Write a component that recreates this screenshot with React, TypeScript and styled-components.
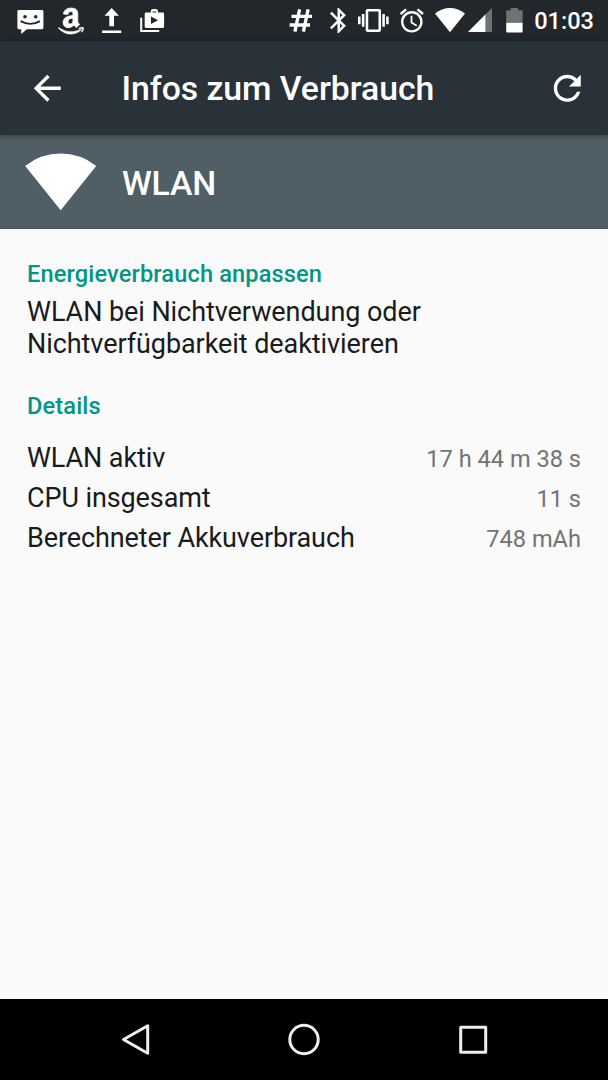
import React from "react";
import styled, { createGlobalStyle } from "styled-components";
import { FaAmazon } from "react-icons/fa";

const GlobalStyle = createGlobalStyle`
  * { box-sizing: border-box; }
  body { margin: 0; background: #fafafa; }
`;

const Screen = styled.div`
  width: 608px;
  height: 1080px;
  display: flex;
  flex-direction: column;
  overflow: hidden;
  background: #fafafa;
  font-family: Roboto, "Liberation Sans", sans-serif;
`;

const StatusBar = styled.div`
  flex: 0 0 41px;
  display: flex;
  justify-content: space-between;
  padding: 0 14px 0 17px;
  background: #21272b;
  color: #fff;
`;

const StatusGroup = styled.div`
  display: flex;
  height: 41px;
`;

const StatusSvg = styled.svg<{ $before: number }>`
  display: block;
  flex: none;
  height: 41px;
  margin-left: ${(p) => p.$before}px;
  fill: #fff;
`;

const AmazonLogo = styled(FaAmazon)`
  flex: none;
  width: 26px;
  height: 30px;
  margin: 6px 0 0 14px;
  stroke: currentColor;
  stroke-width: 12px;
`;

const Clock = styled.span`
  margin-left: 11px;
  font-size: 23.6px;
  font-weight: 500;
  line-height: 43px;
`;

const AppBar = styled.header`
  flex: 0 0 94px;
  display: flex;
  align-items: center;
  padding: 0 20.5px 0 27px;
  background: #283238;
  color: #fff;
  box-shadow: 0 1px 5px rgba(0, 0, 0, 0.4);
  z-index: 1;
`;

const IconButton = styled.button`
  display: flex;
  padding: 0;
  border: 0;
  background: none;
  color: inherit;
`;

const ActionSvg = styled.svg`
  display: block;
  width: 40.5px;
  height: 40.5px;
  fill: currentColor;
`;

const Title = styled.h1`
  flex: 1;
  margin: 2px 0 0 54px;
  font-size: 33.8px;
  font-weight: 500;
  letter-spacing: -0.06px;
  line-height: 40px;
`;

const Banner = styled.section`
  flex: 0 0 94px;
  display: flex;
  align-items: center;
  padding-left: 25px;
  background: #505e65;
  border-bottom: 1px solid #46545b;
  color: #fff;
`;

const BannerTitle = styled.h2`
  margin: 4px 0 0 25px;
  font-size: 33.8px;
  font-weight: 500;
  letter-spacing: -0.15px;
  line-height: 40px;
`;

const Content = styled.main`
  flex: 1;
  padding: 31px 27px 0;
  color: #191b1c;
`;

const SectionTitle = styled.h3<{ $top?: number }>`
  margin: ${(p) => p.$top ?? 0}px 0 0;
  color: #009688;
  font-size: 23.6px;
  font-weight: 500;
  letter-spacing: 0.13px;
  line-height: 28px;
`;

const Suggestion = styled.p`
  margin: 8px 0 0;
  font-size: 27px;
  letter-spacing: -0.07px;
  line-height: 32px;
`;

const DetailList = styled.dl`
  margin: 18px 0 0;
`;

const DetailRow = styled.div`
  display: flex;
  justify-content: space-between;
  align-items: baseline;
  height: 40px;
  line-height: 40px;
`;

const DetailLabel = styled.dt`
  font-size: 27px;
  letter-spacing: -0.1px;
`;

const DetailValue = styled.dd`
  margin: 0;
  color: #737373;
  font-size: 23.6px;
`;

const NavBar = styled.nav`
  flex: 0 0 81px;
  display: flex;
  justify-content: center;
  align-items: center;
  gap: 128.5px;
  background: #000;
  color: #eceff1;
`;

const NavSvg = styled.svg`
  display: block;
  width: 40px;
  height: 40px;
  fill: none;
  stroke: currentColor;
  stroke-width: 3;
  stroke-linejoin: round;
`;

type IconProps = { x: number; width: number; before: number; children: React.ReactNode };

function StatusIcon({ x, width, before, children }: IconProps) {
  return (
    <StatusSvg $before={before} width={width} viewBox={`${x} 0 ${width} 41`}>
      {children}
    </StatusSvg>
  );
}

const details = [
  { label: "WLAN aktiv", value: "17 h 44 m 38 s" },
  { label: "CPU insgesamt", value: "11 s" },
  { label: "Berechneter Akkuverbrauch", value: "748 mAh" },
];

export default function App() {
  return (
    <Screen>
      <GlobalStyle />
      <StatusBar>
        <StatusGroup>
          <StatusIcon x={17} width={27} before={0}>
            <path d="M18.8 10h23.2q1.4 0 1.4 1.4v16.4q0 1.4-1.4 1.4H27L21.2 34v-4.8h-2.4q-1.4 0-1.4-1.4V11.4q0-1.4 1.4-1.4z" />
            <g fill="#21272b">
              <circle cx="25" cy="16.8" r="1.8" />
              <circle cx="35.7" cy="16.8" r="1.8" />
            </g>
            <path d="M20.6 21.2q9.7 5.4 19.4 0" fill="none" stroke="#21272b" strokeWidth="1.9" />
          </StatusIcon>
          <AmazonLogo />
          <StatusIcon x={102} width={20} before={18}>
            <path d="M111.7 8l7.2 7.7h-4.9V26.2h-4.7V15.7h-4.8zM102 30.4h19.2V33H102z" />
          </StatusIcon>
          <StatusIcon x={140} width={25} before={18}>
            <path d="M141.2 17.8v13.2h18" fill="none" stroke="#fff" strokeWidth="2" />
            <path
              fillRule="evenodd"
              d="M146 12.6h4.8v-1.2q0-2.4 2.4-2.4h2.4q2.4 0 2.4 2.4v1.2h4.8q1.3 0 1.3 1.3v12.7q0 1.3-1.3 1.3H146q-1.3 0-1.3-1.3V13.9q0-1.3 1.3-1.3zM152.6 12.6h3.6v-1.2h-3.6zM151 16.6v7.4l7-3.7z"
            />
          </StatusIcon>
        </StatusGroup>
        <StatusGroup>
          <StatusIcon x={289} width={24} before={0}>
            <path
              d="M299.6 9.3L294.9 31.7M308.1 9.3L303.4 31.7M291.5 16.4H312M289.6 25H310"
              fill="none"
              stroke="#fff"
              strokeWidth="3.3"
            />
          </StatusIcon>
          <StatusIcon x={330} width={16} before={17}>
            <path
              transform="translate(323.75 5.5) scale(1.25)"
              d="M17.71 7.71L12 2h-1v7.59L6.41 5 5 6.41 10.59 12 5 17.59 6.41 19 11 14.41V22h1l5.71-5.71-4.3-4.29 4.3-4.29zM13 5.83l1.88 1.88L13 9.59V5.83zm1.88 10.46L13 18.17v-3.76l1.88 1.88z"
            />
          </StatusIcon>
          <StatusIcon x={358} width={31} before={12}>
            <path
              transform="translate(358 5.1) scale(1.28)"
              d="M0 15h2V9H0v6zm3 2h2V7H3v10zm19-8v6h2V9h-2zm-3 8h2V7h-2v10zM16.5 3h-9C6.67 3 6 3.67 6 4.5v15c0 .83.67 1.5 1.5 1.5h9c.83 0 1.5-.67 1.5-1.5v-15c0-.83-.67-1.5-1.5-1.5zM16 19H8V5h8v14z"
            />
          </StatusIcon>
          <StatusIcon x={399} width={26} before={10}>
            <path
              transform="translate(397.4 6.2) scale(1.2)"
              d="M22 5.72l-4.6-3.86-1.29 1.53 4.6 3.86L22 5.72zM7.88 3.39L6.6 1.86 2 5.71l1.29 1.53 4.59-3.85zM12.5 8H11v6l4.75 2.85.75-1.23-4-2.37V8zM12 4c-4.97 0-9 4.03-9 9s4.02 9 9 9c4.97 0 9-4.03 9-9s-4.03-9-9-9zm0 16c-3.87 0-7-3.13-7-7s3.13-7 7-7 7 3.13 7 7-3.13 7-7 7z"
            />
          </StatusIcon>
          <StatusIcon x={434} width={32} before={9}>
            <path d="M450 32.2L435 13.6Q441.8 8 450 8t15 5.6z" />
          </StatusIcon>
          <StatusIcon x={467} width={26} before={1}>
            <path d="M492 8v24h-24z" opacity="0.35" />
            <path d="M485.4 14.6V32H468z" />
          </StatusIcon>
          <StatusIcon x={506} width={17} before={13}>
            <path d="M510.6 8h7.6v2.2h3.4q1 0 1 1V22.8h-16.4V11.2q0-1 1-1h3.4z" opacity="0.35" />
            <path d="M506.2 22.8h16.4v8.8q0 1-1 1h-14.4q-1 0-1-1z" />
          </StatusIcon>
          <Clock>01:03</Clock>
        </StatusGroup>
      </StatusBar>

      <AppBar>
        <IconButton aria-label="Zurück">
          <ActionSvg viewBox="0 0 24 24">
            <path d="M20 11H7.83l5.59-5.59L12 4l-8 8 8 8 1.41-1.41L7.83 13H20v-2z" />
          </ActionSvg>
        </IconButton>
        <Title>Infos zum Verbrauch</Title>
        <IconButton aria-label="Aktualisieren">
          <ActionSvg viewBox="0 0 24 24">
            <path d="M17.65 6.35C16.2 4.9 14.21 4 12 4c-4.42 0-7.99 3.58-7.99 8s3.57 8 7.99 8c3.73 0 6.84-2.55 7.73-6h-2.08c-.82 2.33-3.04 4-5.65 4-3.31 0-6-2.69-6-6s2.69-6 6-6c1.66 0 3.14.69 4.22 1.78L13 11h7V4l-2.35 2.35z" />
          </ActionSvg>
        </IconButton>
      </AppBar>

      <Banner>
        <svg width="72" height="58" viewBox="0 0 72 58" fill="#fff">
          <path d="M35.7 57.2L.2 12.9Q16 .6 35.7.6t35.5 12.3z" />
        </svg>
        <BannerTitle>WLAN</BannerTitle>
      </Banner>

      <Content>
        <SectionTitle>Energieverbrauch anpassen</SectionTitle>
        <Suggestion>
          WLAN bei Nichtverwendung oder
          <br />
          Nichtverfügbarkeit deaktivieren
        </Suggestion>
        <SectionTitle $top={32}>Details</SectionTitle>
        <DetailList>
          {details.map((d) => (
            <DetailRow key={d.label}>
              <DetailLabel>{d.label}</DetailLabel>
              <DetailValue>{d.value}</DetailValue>
            </DetailRow>
          ))}
        </DetailList>
      </Content>

      <NavBar>
        <NavSvg viewBox="0 0.5 40 40">
          <path d="M7.5 20L31.7 6.2v27.6z" />
        </NavSvg>
        <NavSvg viewBox="0 0.5 40 40">
          <circle cx="20" cy="20" r="14.2" />
        </NavSvg>
        <NavSvg viewBox="0 0.5 40 40">
          <rect x="7.7" y="7.7" width="25" height="25" />
        </NavSvg>
      </NavBar>
    </Screen>
  );
}
